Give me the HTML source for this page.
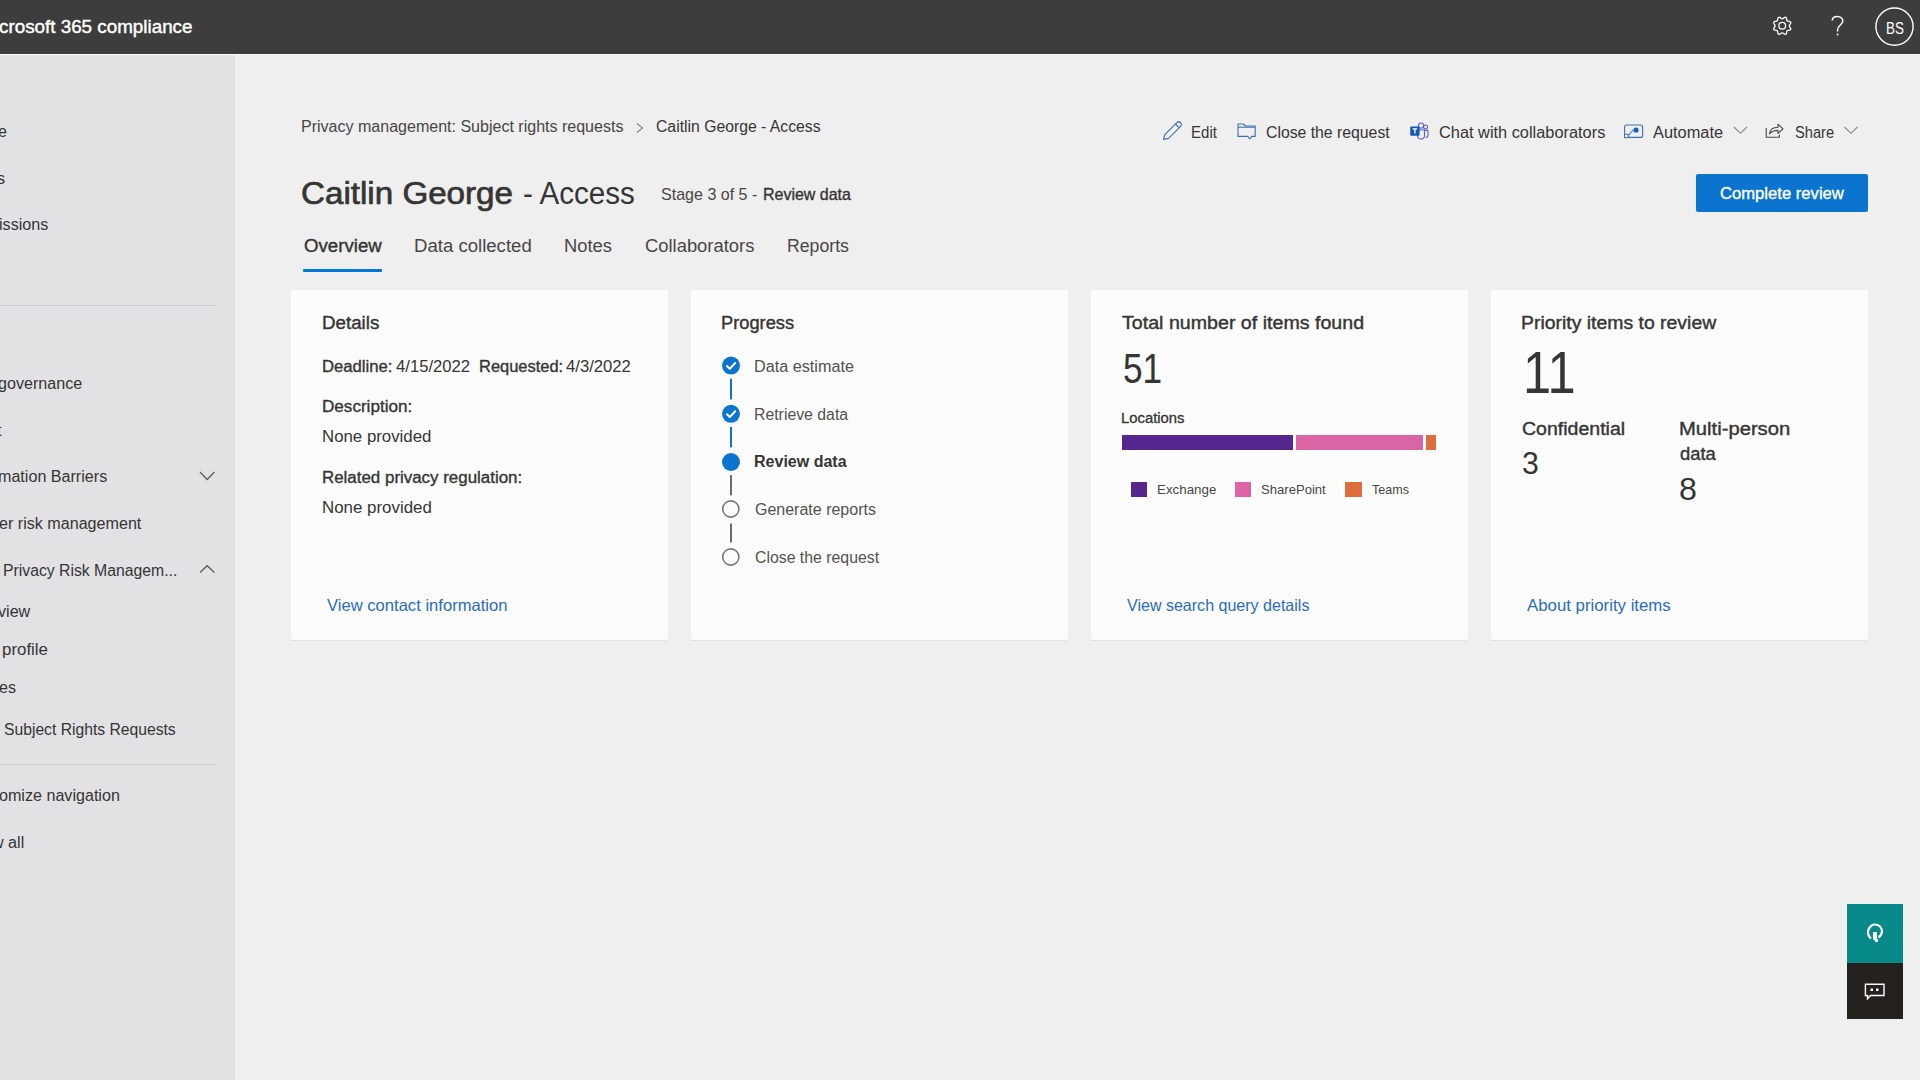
<!DOCTYPE html>
<html><head><meta charset="utf-8">
<style>
html,body{margin:0;padding:0;width:1920px;height:1080px;overflow:hidden;}
body{position:relative;background:#efeff0;font-family:"Liberation Sans",sans-serif;}
.t{position:absolute;white-space:nowrap;transform-origin:0 0;}
.abs{position:absolute;}
#hdr{position:absolute;left:0;top:0;width:1920px;height:54px;background:#3e3d3d;}
#nav{position:absolute;left:0;top:55px;width:235px;height:1025px;background:#e2e2e4;}
.card{position:absolute;top:290px;width:377px;height:350px;background:#fcfcfc;border-radius:2px;box-shadow:0 1px 1px rgba(0,0,0,.06);}
.div{position:absolute;left:0;width:217px;height:1px;background:#cfcdcb;}
svg{position:absolute;overflow:visible;}
</style></head><body>
<div id="hdr"></div>
<div id="nav"></div>
<div class="abs" style="left:0;top:54px;width:1920px;height:1px;background:#fbfbfb"></div>
<div class="div" style="top:305px"></div>
<div class="div" style="top:764px"></div>

<!-- nav chevrons -->
<svg style="left:0;top:0" width="1" height="1">
  <path d="M200 472 L207.2 479.5 L214.4 472" fill="none" stroke="#605e5c" stroke-width="1.3"/>
  <path d="M200 572.5 L207.2 565.7 L214.4 572.5" fill="none" stroke="#605e5c" stroke-width="1.3"/>
</svg>

<!-- header icons -->
<svg style="left:0;top:0" width="1" height="1">
  <g fill="none" stroke="#ffffff" stroke-width="1.5">
    <circle cx="1782.2" cy="25.8" r="3.4" stroke-width="1.3"/>
    <path d="M1785.72 17.30 L1786.12 17.59 L1786.40 18.06 L1786.57 18.66 L1786.67 19.29 L1786.78 19.83 L1786.89 20.31 L1787.06 20.68 L1787.32 20.94 L1787.69 21.11 L1788.17 21.22 L1788.71 21.33 L1789.34 21.43 L1789.94 21.60 L1790.41 21.88 L1790.70 22.28 L1790.77 22.76 L1790.64 23.30 L1790.34 23.85 L1789.97 24.36 L1789.66 24.82 L1789.40 25.23 L1789.26 25.62 L1789.26 25.98 L1789.40 26.37 L1789.66 26.78 L1789.97 27.24 L1790.34 27.75 L1790.64 28.30 L1790.77 28.84 L1790.70 29.32 L1790.41 29.72 L1789.94 30.00 L1789.34 30.17 L1788.71 30.27 L1788.17 30.38 L1787.69 30.49 L1787.32 30.66 L1787.06 30.92 L1786.89 31.29 L1786.78 31.77 L1786.67 32.31 L1786.57 32.94 L1786.40 33.54 L1786.12 34.01 L1785.72 34.30 L1785.24 34.37 L1784.70 34.24 L1784.15 33.94 L1783.64 33.57 L1783.18 33.26 L1782.77 33.00 L1782.38 32.86 L1782.02 32.86 L1781.63 33.00 L1781.22 33.26 L1780.76 33.57 L1780.25 33.94 L1779.70 34.24 L1779.16 34.37 L1778.68 34.30 L1778.28 34.01 L1778.00 33.54 L1777.83 32.94 L1777.73 32.31 L1777.62 31.77 L1777.51 31.29 L1777.34 30.92 L1777.08 30.66 L1776.71 30.49 L1776.23 30.38 L1775.69 30.27 L1775.06 30.17 L1774.46 30.00 L1773.99 29.72 L1773.70 29.32 L1773.63 28.84 L1773.76 28.30 L1774.06 27.75 L1774.43 27.24 L1774.74 26.78 L1775.00 26.37 L1775.14 25.98 L1775.14 25.62 L1775.00 25.23 L1774.74 24.82 L1774.43 24.36 L1774.06 23.85 L1773.76 23.30 L1773.63 22.76 L1773.70 22.28 L1773.99 21.88 L1774.46 21.60 L1775.06 21.43 L1775.69 21.33 L1776.23 21.22 L1776.71 21.11 L1777.08 20.94 L1777.34 20.68 L1777.51 20.31 L1777.62 19.83 L1777.73 19.29 L1777.83 18.66 L1778.00 18.06 L1778.28 17.59 L1778.68 17.30 L1779.16 17.23 L1779.70 17.36 L1780.25 17.66 L1780.76 18.03 L1781.22 18.34 L1781.63 18.60 L1782.02 18.74 L1782.38 18.74 L1782.77 18.60 L1783.18 18.34 L1783.64 18.03 L1784.15 17.66 L1784.70 17.36 L1785.24 17.23 L1785.72 17.30 Z" stroke-width="1.3"/>
    <path d="M1832.2 20.5 C1832.2 17.6 1834.6 16.4 1837.4 16.4 C1840.6 16.4 1842.8 18.4 1842.8 21 C1842.8 24.6 1837.6 25.6 1837.6 29.8 L1837.6 31.5"/>
    <circle cx="1894.5" cy="26.6" r="18.6" stroke-width="1.4"/>
  </g>
  <circle cx="1837.6" cy="34.6" r="1" fill="#fff"/>
</svg>

<!-- breadcrumb chevron -->
<svg style="left:0;top:0" width="1" height="1">
  <path d="M637 123.5 L642.5 128 L637 132.5" fill="none" stroke="#8a8886" stroke-width="1.2"/>
</svg>

<!-- tab underline -->
<div class="abs" style="left:303px;top:269px;width:79px;height:3px;background:#0078d4;border-radius:1px"></div>

<!-- toolbar icons -->
<svg style="left:0;top:0" width="1" height="1">
  <g fill="none" stroke="#3f6fae" stroke-width="1.1" stroke-linejoin="round">
    <!-- pencil -->
    <path d="M1163.5 139.5 L1164.8 134.6 L1176.8 122.6 C1177.8 121.6 1179.6 121.6 1180.6 122.6 C1181.6 123.6 1181.6 125.4 1180.6 126.4 L1168.6 138.4 Z"/>
    <path d="M1175.4 124 L1179.2 127.8"/>
    <!-- close request -->
    <path d="M1238 124 L1243.5 124 L1245.5 126 L1255.2 126 L1255.2 136.4 L1251.8 136.4 L1249.8 139 L1247.8 136.4 L1238 136.4 Z"/>
    <path d="M1238 127.2 L1255.2 127.2"/>
    <!-- automate -->
    <rect x="1624.6" y="125" width="18" height="12.4" rx="2"/>
    <path d="M1628 136 L1633 130"/>
    <rect x="1624.6" y="134.2" width="3.6" height="3.6" fill="#fdfdfd"/>
  </g>
  <circle cx="1636" cy="130" r="2.6" fill="#0f62c2"/>
  <!-- share -->
  <g fill="none" stroke="#4a4948" stroke-width="1.1" stroke-linejoin="round">
    <path d="M1766.2 128 L1766.2 137.2 L1779.4 137.2 L1779.4 134.5"/>
    <path d="M1769.5 134 C1770 129 1773.5 127.2 1778 127.2 L1778 124.2 L1783 128.8 L1778 133.3 L1778 130.4 C1774.5 130.4 1771.5 131.4 1769.5 134 Z"/>
  </g>
  <!-- chevrons -->
  <g fill="none" stroke="#8a8886" stroke-width="1.1">
    <path d="M1734 127 L1740.5 133.3 L1747 127"/>
    <path d="M1844.4 127 L1851 133.3 L1857.5 127"/>
  </g>
  <!-- teams -->
  <g>
    <circle cx="1421" cy="125.6" r="2.6" fill="none" stroke="#5b5fc7" stroke-width="1.1"/>
    <circle cx="1425.6" cy="127" r="2" fill="none" stroke="#5b5fc7" stroke-width="1.1"/>
    <path d="M1417.5 130 L1424.5 130 L1424.5 136 C1424.5 138 1422.5 139 1421 139 C1419 139 1417.5 137.5 1417.5 136 Z" fill="none" stroke="#5b5fc7" stroke-width="1.1"/>
    <path d="M1425 130.5 L1428 130.5 L1428 135 C1428 136.5 1427 137.5 1425.5 137.5" fill="none" stroke="#5b5fc7" stroke-width="1.1"/>
    <rect x="1410.2" y="126.4" width="9.4" height="9.4" rx="1" fill="#1459b8"/>
    <path d="M1412.6 128.8 L1417.2 128.8 M1414.9 128.8 L1414.9 133.6" stroke="#fff" stroke-width="1.3"/>
  </g>
</svg>

<!-- button -->
<div class="abs" style="left:1696px;top:174px;width:172px;height:38px;background:#0a74cf;border-radius:2px"></div>

<!-- cards -->
<div class="card" style="left:291px"></div>
<div class="card" style="left:691px"></div>
<div class="card" style="left:1091px"></div>
<div class="card" style="left:1491px"></div>

<!-- progress steps -->
<svg style="left:0;top:0" width="1" height="1">
  <g fill="#0a74cf">
    <rect x="730" y="378.7" width="2" height="20.7"/>
    <rect x="730" y="427" width="2" height="20.3"/>
    <circle cx="731" cy="365.6" r="9"/>
    <circle cx="731" cy="413.8" r="9"/>
    <circle cx="731" cy="462" r="9"/>
  </g>
  <g fill="none" stroke="#ffffff" stroke-width="2" stroke-linecap="round" stroke-linejoin="round">
    <path d="M727 366 L729.8 368.8 L735.2 363"/>
    <path d="M727 414.2 L729.8 417 L735.2 411.2"/>
  </g>
  <g fill="#6e6c6a">
    <rect x="730" y="475.1" width="2" height="20.2"/>
    <rect x="730" y="523.5" width="2" height="19"/>
  </g>
  <g fill="none" stroke="#7a7876" stroke-width="1.6">
    <circle cx="730.8" cy="509" r="8.1"/>
    <circle cx="730.8" cy="557" r="8.1"/>
  </g>
</svg>

<!-- bar chart -->
<div class="abs" style="left:1122px;top:435px;width:171px;height:15px;background:#55278e"></div>
<div class="abs" style="left:1296px;top:435px;width:127px;height:15px;background:#da64a4"></div>
<div class="abs" style="left:1426px;top:435px;width:10px;height:15px;background:#de6d3e"></div>
<div class="abs" style="left:1130.5px;top:481.5px;width:16.5px;height:15px;background:#55278e"></div>
<div class="abs" style="left:1234.5px;top:481.5px;width:16.5px;height:15px;background:#da64a4"></div>
<div class="abs" style="left:1345px;top:481.5px;width:16.5px;height:15px;background:#de6d3e"></div>

<!-- FAB -->
<div class="abs" style="left:1847px;top:904px;width:56px;height:59px;background:#088a8a"></div>
<div class="abs" style="left:1847px;top:963px;width:56px;height:56px;background:#24211f"></div>
<svg style="left:0;top:0" width="1" height="1">
  <g fill="none" stroke="#fff" stroke-width="2">
    <path d="M1871 938.5 C1867.5 936 1867.5 931.5 1868.5 929.5 C1870 926 1873 924.5 1875 924.5 C1879 924.5 1882 927.5 1882 931 C1882 934 1880.5 936 1878.5 937.5" stroke-width="2.2"/>
  </g>
  <path d="M1873 932 L1877 932 L1877 938 L1876.5 940 L1873.5 940 L1873 938 Z" fill="#fff"/>
  <circle cx="1876.5" cy="940.5" r="1.8" fill="#fff"/>
  <g>
  <g fill="none" stroke="#fff" stroke-width="1.4">
    <path d="M1865.4 984.3 L1884 984.3 L1884 995.5 L1870.5 995.5 L1867.5 998.8 L1867.5 995.5 L1865.4 995.5 Z"/>
  </g>
  <rect x="1870.5" y="988.5" width="2.5" height="2.5" fill="#fff"/>
  <rect x="1876" y="988.5" width="2.5" height="2.5" fill="#fff"/>
</svg>

<div class="t" style="left:-1.50px;top:18.40px;font-size:18.5px;line-height:18.5px;font-weight:normal;color:#ffffff;-webkit-text-stroke:0.41px #ffffff;transform:scaleX(1.0171)">crosoft 365 compliance</div>
<div class="t" style="left:1886.16px;top:21.00px;font-size:16px;line-height:16px;font-weight:normal;color:#ffffff;transform:scaleX(0.8388)">BS</div>
<div class="t" style="left:3.01px;top:563.10px;font-size:16px;line-height:16px;font-weight:normal;color:#363534;transform:scaleX(0.9851)">Privacy Risk Managem...</div>
<div class="t" style="left:3.60px;top:721.80px;font-size:16px;line-height:16px;font-weight:normal;color:#363534;transform:scaleX(0.9800)">Subject Rights Requests</div>
<div class="t" style="left:1.65px;top:642.40px;font-size:16px;line-height:16px;font-weight:normal;color:#363534;transform:scaleX(1.0544)">profile</div>
<div class="t" style="left:-1.56px;top:123.70px;font-size:16px;line-height:16px;font-weight:normal;color:#363534;transform:scaleX(1.0065)">e</div>
<div class="t" style="left:-3.05px;top:170.60px;font-size:16px;line-height:16px;font-weight:normal;color:#363534;transform:scaleX(1.0065)">s</div>
<div class="t" style="left:-1.22px;top:216.70px;font-size:16px;line-height:16px;font-weight:normal;color:#363534;transform:scaleX(1.0065)">issions</div>
<div class="t" style="left:-2.26px;top:376.20px;font-size:16px;line-height:16px;font-weight:normal;color:#363534;transform:scaleX(1.0065)">governance</div>
<div class="t" style="left:-2.93px;top:422.80px;font-size:16px;line-height:16px;font-weight:normal;color:#363534;transform:scaleX(1.0065)">t</div>
<div class="t" style="left:-2.18px;top:469.10px;font-size:16px;line-height:16px;font-weight:normal;color:#363534;transform:scaleX(1.0065)">mation Barriers</div>
<div class="t" style="left:-1.47px;top:516.00px;font-size:16px;line-height:16px;font-weight:normal;color:#363534;transform:scaleX(1.0065)">er risk management</div>
<div class="t" style="left:-2.46px;top:604.40px;font-size:16px;line-height:16px;font-weight:normal;color:#363534;transform:scaleX(1.0065)">view</div>
<div class="t" style="left:-0.61px;top:680.30px;font-size:16px;line-height:16px;font-weight:normal;color:#363534;transform:scaleX(1.0065)">es</div>
<div class="t" style="left:-0.85px;top:787.80px;font-size:16px;line-height:16px;font-weight:normal;color:#363534;transform:scaleX(1.0065)">omize navigation</div>
<div class="t" style="left:-8.46px;top:834.80px;font-size:16px;line-height:16px;font-weight:normal;color:#363534;transform:scaleX(1.0065)">w all</div>
<div class="t" style="left:301.00px;top:119.20px;font-size:16px;line-height:16px;font-weight:normal;color:#484644;transform:scaleX(1.0015)">Privacy management: Subject rights requests</div>
<div class="t" style="left:655.60px;top:119.10px;font-size:16px;line-height:16px;font-weight:normal;color:#363534;transform:scaleX(0.9842)">Caitlin George - Access</div>
<div class="t" style="left:301.23px;top:177.60px;font-size:31px;line-height:31px;font-weight:normal;color:#363534;-webkit-text-stroke:0.68px #363534;transform:scaleX(1.0699)">Caitlin George</div>
<div class="t" style="left:522.84px;top:177.60px;font-size:31px;line-height:31px;font-weight:normal;color:#363534;transform:scaleX(0.9552)">- Access</div>
<div class="t" style="left:660.90px;top:186.20px;font-size:17px;line-height:17px;font-weight:normal;color:#484644;transform:scaleX(0.9437)">Stage 3 of 5 -</div>
<div class="t" style="left:762.76px;top:186.20px;font-size:17px;line-height:17px;font-weight:normal;color:#363534;-webkit-text-stroke:0.37px #363534;transform:scaleX(0.9399)">Review data</div>
<div class="t" style="left:303.50px;top:238.10px;font-size:17.5px;line-height:17.5px;font-weight:normal;color:#363534;-webkit-text-stroke:0.38px #363534;transform:scaleX(1.0656)">Overview</div>
<div class="t" style="left:414.34px;top:238.10px;font-size:17.5px;line-height:17.5px;font-weight:normal;color:#484644;transform:scaleX(1.0617)">Data collected</div>
<div class="t" style="left:563.75px;top:238.10px;font-size:17.5px;line-height:17.5px;font-weight:normal;color:#484644;transform:scaleX(1.0475)">Notes</div>
<div class="t" style="left:644.80px;top:238.10px;font-size:17.5px;line-height:17.5px;font-weight:normal;color:#484644;transform:scaleX(1.0505)">Collaborators</div>
<div class="t" style="left:786.69px;top:238.10px;font-size:17.5px;line-height:17.5px;font-weight:normal;color:#484644;transform:scaleX(1.0111)">Reports</div>
<div class="t" style="left:1191.46px;top:124.70px;font-size:16px;line-height:16px;font-weight:normal;color:#363534;transform:scaleX(0.9401)">Edit</div>
<div class="t" style="left:1266.40px;top:124.70px;font-size:16px;line-height:16px;font-weight:normal;color:#363534;transform:scaleX(0.9860)">Close the request</div>
<div class="t" style="left:1438.70px;top:124.70px;font-size:16px;line-height:16px;font-weight:normal;color:#363534;transform:scaleX(1.0219)">Chat with collaborators</div>
<div class="t" style="left:1653.40px;top:124.70px;font-size:16px;line-height:16px;font-weight:normal;color:#363534;transform:scaleX(1.0235)">Automate</div>
<div class="t" style="left:1794.90px;top:124.70px;font-size:16px;line-height:16px;font-weight:normal;color:#363534;transform:scaleX(0.9136)">Share</div>
<div class="t" style="left:1720.10px;top:185.90px;font-size:16px;line-height:16px;font-weight:normal;color:#ffffff;-webkit-text-stroke:0.35px #ffffff;transform:scaleX(1.0393)">Complete review</div>
<div class="t" style="left:321.86px;top:314.10px;font-size:18px;line-height:18px;font-weight:normal;color:#363534;-webkit-text-stroke:0.40px #363534;transform:scaleX(1.0404)">Details</div>
<div class="t" style="left:321.86px;top:359.00px;font-size:16px;line-height:16px;font-weight:normal;color:#363534;-webkit-text-stroke:0.35px #363534;transform:scaleX(1.0421)">Deadline:</div>
<div class="t" style="left:396.00px;top:359.00px;font-size:16px;line-height:16px;font-weight:normal;color:#363534;transform:scaleX(1.0409)">4/15/2022</div>
<div class="t" style="left:479.17px;top:359.00px;font-size:16px;line-height:16px;font-weight:normal;color:#363534;-webkit-text-stroke:0.35px #363534;transform:scaleX(1.0278)">Requested:</div>
<div class="t" style="left:566.40px;top:359.00px;font-size:16px;line-height:16px;font-weight:normal;color:#363534;transform:scaleX(1.0420)">4/3/2022</div>
<div class="t" style="left:321.83px;top:399.40px;font-size:16px;line-height:16px;font-weight:normal;color:#363534;-webkit-text-stroke:0.35px #363534;transform:scaleX(1.0679)">Description:</div>
<div class="t" style="left:321.85px;top:429.00px;font-size:16px;line-height:16px;font-weight:normal;color:#363534;transform:scaleX(1.0512)">None provided</div>
<div class="t" style="left:321.54px;top:469.60px;font-size:16px;line-height:16px;font-weight:normal;color:#363534;-webkit-text-stroke:0.35px #363534;transform:scaleX(1.0567)">Related privacy regulation:</div>
<div class="t" style="left:321.54px;top:499.50px;font-size:16px;line-height:16px;font-weight:normal;color:#363534;transform:scaleX(1.0551)">None provided</div>
<div class="t" style="left:327.30px;top:597.20px;font-size:16.5px;line-height:16.5px;font-weight:normal;color:#2a6cbc;transform:scaleX(1.0057)">View contact information</div>
<div class="t" style="left:721.18px;top:314.10px;font-size:18px;line-height:18px;font-weight:normal;color:#363534;-webkit-text-stroke:0.40px #363534;transform:scaleX(1.0151)">Progress</div>
<div class="t" style="left:754.09px;top:358.90px;font-size:16px;line-height:16px;font-weight:normal;color:#53514f;transform:scaleX(1.0121)">Data estimate</div>
<div class="t" style="left:754.11px;top:406.80px;font-size:16px;line-height:16px;font-weight:normal;color:#53514f;transform:scaleX(0.9887)">Retrieve data</div>
<div class="t" style="left:754.10px;top:454.40px;font-size:16px;line-height:16px;font-weight:bold;color:#363534;transform:scaleX(1.0012)">Review data</div>
<div class="t" style="left:755.30px;top:502.10px;font-size:16px;line-height:16px;font-weight:normal;color:#53514f;transform:scaleX(0.9996)">Generate reports</div>
<div class="t" style="left:755.30px;top:549.90px;font-size:16px;line-height:16px;font-weight:normal;color:#53514f;transform:scaleX(0.9892)">Close the request</div>
<div class="t" style="left:1122.20px;top:314.10px;font-size:18px;line-height:18px;font-weight:normal;color:#363534;-webkit-text-stroke:0.40px #363534;transform:scaleX(1.0900)">Total number of items found</div>
<div class="t" style="left:1123.36px;top:348.40px;font-size:42px;line-height:42px;font-weight:normal;color:#363534;transform:scaleX(0.8386)">51</div>
<div class="t" style="left:1120.94px;top:410.70px;font-size:14px;line-height:14px;font-weight:normal;color:#363534;-webkit-text-stroke:0.31px #363534;transform:scaleX(1.0589)">Locations</div>
<div class="t" style="left:1156.51px;top:483.40px;font-size:13.5px;line-height:13.5px;font-weight:normal;color:#484644;transform:scaleX(0.9891)">Exchange</div>
<div class="t" style="left:1261.40px;top:483.40px;font-size:13.5px;line-height:13.5px;font-weight:normal;color:#484644;transform:scaleX(0.9695)">SharePoint</div>
<div class="t" style="left:1372.10px;top:483.40px;font-size:13.5px;line-height:13.5px;font-weight:normal;color:#484644;transform:scaleX(0.9297)">Teams</div>
<div class="t" style="left:1126.60px;top:597.20px;font-size:16.5px;line-height:16.5px;font-weight:normal;color:#2a6cbc;transform:scaleX(0.9719)">View search query details</div>
<div class="t" style="left:1521.22px;top:314.10px;font-size:18px;line-height:18px;font-weight:normal;color:#363534;-webkit-text-stroke:0.40px #363534;transform:scaleX(1.0782)">Priority items to review</div>
<div class="t" style="left:1523.24px;top:343.70px;font-size:58.5px;line-height:58.5px;font-weight:normal;color:#363534;transform:scaleX(0.8654)">11</div>
<div class="t" style="left:1521.80px;top:420.70px;font-size:17.5px;line-height:17.5px;font-weight:normal;color:#363534;-webkit-text-stroke:0.38px #363534;transform:scaleX(1.1154)">Confidential</div>
<div class="t" style="left:1521.93px;top:447.60px;font-size:31px;line-height:31px;font-weight:normal;color:#363534;transform:scaleX(0.9733)">3</div>
<div class="t" style="left:1678.75px;top:420.70px;font-size:17.5px;line-height:17.5px;font-weight:normal;color:#363534;-webkit-text-stroke:0.38px #363534;transform:scaleX(1.1549)">Multi-person</div>
<div class="t" style="left:1679.90px;top:446.10px;font-size:17.5px;line-height:17.5px;font-weight:normal;color:#363534;-webkit-text-stroke:0.38px #363534;transform:scaleX(1.0516)">data</div>
<div class="t" style="left:1679.46px;top:473.60px;font-size:31px;line-height:31px;font-weight:normal;color:#363534;transform:scaleX(1.0400)">8</div>
<div class="t" style="left:1526.90px;top:597.20px;font-size:16.5px;line-height:16.5px;font-weight:normal;color:#2a6cbc;transform:scaleX(1.0180)">About priority items</div>
</body></html>
